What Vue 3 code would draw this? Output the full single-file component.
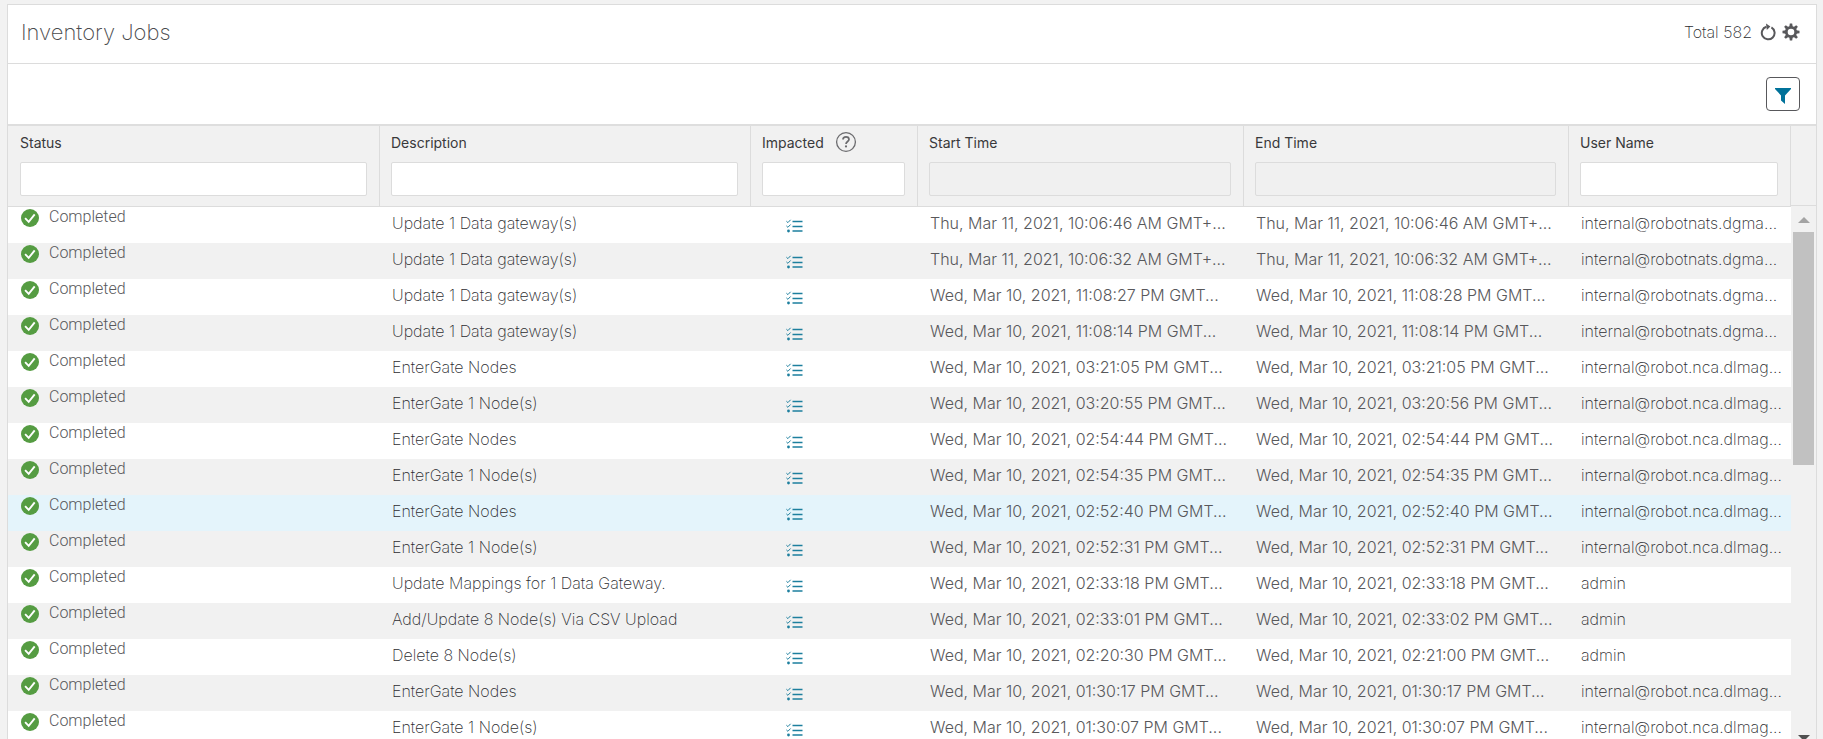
<script setup>
const columns = [
  { key: 'status', label: 'Status' },
  { key: 'description', label: 'Description' },
  { key: 'impacted', label: 'Impacted', help: true },
  { key: 'start', label: 'Start Time', disabled: true },
  { key: 'end', label: 'End Time', disabled: true },
  { key: 'user', label: 'User Name' },
]

const thu = (time) => `Thu, Mar 11, 2021, ${time} AM GMT+...`
const wed = (time) => `Wed, Mar 10, 2021, ${time} PM GMT...`
const dgma = 'internal@robotnats.dgma...'
const nca = 'internal@robot.nca.dlmag...'

const jobs = [
  { description: 'Update 1 Data gateway(s)', start: thu('10:06:46'), end: thu('10:06:46'), user: dgma },
  { description: 'Update 1 Data gateway(s)', start: thu('10:06:32'), end: thu('10:06:32'), user: dgma },
  { description: 'Update 1 Data gateway(s)', start: wed('11:08:27'), end: wed('11:08:28'), user: dgma },
  { description: 'Update 1 Data gateway(s)', start: wed('11:08:14'), end: wed('11:08:14'), user: dgma },
  { description: 'EnterGate Nodes', start: wed('03:21:05'), end: wed('03:21:05'), user: nca },
  { description: 'EnterGate 1 Node(s)', start: wed('03:20:55'), end: wed('03:20:56'), user: nca },
  { description: 'EnterGate Nodes', start: wed('02:54:44'), end: wed('02:54:44'), user: nca },
  { description: 'EnterGate 1 Node(s)', start: wed('02:54:35'), end: wed('02:54:35'), user: nca },
  { description: 'EnterGate Nodes', start: wed('02:52:40'), end: wed('02:52:40'), user: nca, active: true },
  { description: 'EnterGate 1 Node(s)', start: wed('02:52:31'), end: wed('02:52:31'), user: nca },
  { description: 'Update Mappings for 1 Data Gateway.', start: wed('02:33:18'), end: wed('02:33:18'), user: 'admin' },
  { description: 'Add/Update 8 Node(s) Via CSV Upload', start: wed('02:33:01'), end: wed('02:33:02'), user: 'admin' },
  { description: 'Delete 8 Node(s)', start: wed('02:20:30'), end: wed('02:21:00'), user: 'admin' },
  { description: 'EnterGate Nodes', start: wed('01:30:17'), end: wed('01:30:17'), user: nca },
  { description: 'EnterGate 1 Node(s)', start: wed('01:30:07'), end: wed('01:30:07'), user: nca },
]
</script>

<template>
  <div class="page">
    <main class="panel">
      <header class="title-bar">
        <h1>Inventory Jobs</h1>
        <div class="tools">
          <span class="total">Total 582</span>
          <button class="icon-button" type="button" aria-label="Refresh">
            <svg width="16" height="18" viewBox="0 0 16 18">
              <path d="M11.4 4.4A6.4 6.4 0 1 1 6.4 3.8" fill="none" stroke="#58585b" stroke-width="2" />
              <path d="M6 .4 L10.4 3.4 L6.8 7 Z" fill="#58585b" />
            </svg>
          </button>
          <button class="icon-button" type="button" aria-label="Settings">
            <svg width="18" height="18" viewBox="0 0 18 18">
              <g fill="#58585b">
                <path v-for="a in 8" :key="a" :transform="`rotate(${a * 45} 9 9)`" d="M7.3 4 L7.8 .5 H10.2 L10.7 4 Z" />
              </g>
              <circle cx="9" cy="9" r="4.7" fill="none" stroke="#58585b" stroke-width="2.8" />
            </svg>
          </button>
        </div>
      </header>

      <div class="filter-bar">
        <button class="filter-button" type="button" aria-label="Toggle filters">
          <svg width="16" height="16" viewBox="0 0 16 16">
            <path d="M0 0 H16 V1 L10 7.4 V16 L6 12.6 V7.4 L0 1 Z" fill="#00729a" />
          </svg>
        </button>
      </div>

      <div class="grid">
        <table>
          <colgroup>
            <col v-for="c in columns" :key="c.key" :class="`col-${c.key}`" />
          </colgroup>
          <thead>
            <tr>
              <th v-for="c in columns" :key="c.key" scope="col">
                <div class="head">
                  <label :for="`filter-${c.key}`">{{ c.label }}</label>
                  <svg v-if="c.help" width="22" height="22" viewBox="0 0 22 22">
                    <circle cx="11" cy="11" r="9.4" fill="none" stroke="#6b6b6e" stroke-width="1.3" />
                    <path d="M8 8.6C8 6.8 9.3 5.9 11 5.9S14 6.9 14 8.5C14 10.5 11 10.6 11 13" fill="none" stroke="#6b6b6e" stroke-width="1.7" />
                    <circle cx="11" cy="15.4" r="1.1" fill="#6b6b6e" />
                  </svg>
                </div>
                <input :id="`filter-${c.key}`" type="text" :disabled="c.disabled" />
              </th>
            </tr>
          </thead>
          <tbody>
            <tr v-for="(job, i) in jobs" :key="i" :class="{ active: job.active }">
              <td class="status">
                <div class="status-line">
                  <svg width="18" height="18" viewBox="0 0 18 18">
                    <circle cx="9" cy="9" r="9" fill="#559c42" />
                    <path d="M4.1 9.2 L7.7 12.9 L13.7 5.3" fill="none" stroke="#fff" stroke-width="1.9" />
                  </svg>
                  <span>Completed</span>
                </div>
              </td>
              <td>{{ job.description }}</td>
              <td class="impacted">
                <button class="icon-button" type="button" aria-label="Show impacted items">
                  <svg width="17" height="14" viewBox="0 0 17 14" fill="none" stroke="#1d7f9e">
                    <path d="M6.5 2.5 H16.5 M6.5 7.5 H16.5 M6.5 12 H16.5" stroke-width="1.4" />
                    <path d="M.4 2.2 L1.9 3.6 L4.6 .8 M.4 6.9 L1.9 8.3 L4.6 5.5" stroke-width="1" />
                    <circle cx="2.5" cy="12" r="1.4" fill="#1d7f9e" stroke="none" />
                  </svg>
                </button>
              </td>
              <td class="time">{{ job.start }}</td>
              <td class="time">{{ job.end }}</td>
              <td>{{ job.user }}</td>
            </tr>
          </tbody>
        </table>
        <div class="rail">
          <div class="rail-head"></div>
          <div class="track">
            <svg class="arrow" width="12" height="6" viewBox="0 0 12 6"><path d="M0 6 L6 0 L12 6 Z" fill="#a3a3a3" /></svg>
            <div class="thumb"></div>
            <svg class="arrow-down" width="12" height="6" viewBox="0 0 12 6"><path d="M0 0 H12 L6 6 Z" fill="#505050" /></svg>
          </div>
        </div>
      </div>
    </main>
  </div>
</template>

<style>
body {
  margin: 0;
  background: #f2f2f2;
}
</style>

<style scoped>
* {
  box-sizing: border-box;
}
.page {
  height: 100vh;
  padding: 4px 6px 0 7px;
  overflow: hidden;
  background: #f2f2f2;
  color: #2c2c30;
  font-family: Inter, "Liberation Sans", sans-serif;
  font-size: 16px;
  font-weight: 200;
}
.panel {
  height: 100%;
  display: flex;
  flex-direction: column;
  border: 1px solid #dcdcdc;
  border-bottom: 0;
  background: #fff;
}
.title-bar {
  flex: none;
  height: 59px;
  padding: 0 16px 4px 13px;
  display: flex;
  align-items: center;
  justify-content: space-between;
  border-bottom: 1px solid #dcdcdc;
}
h1 {
  margin: 0;
  color: #4a4a4d;
  font-size: 22px;
  line-height: 28px;
  font-weight: 200;
}
.tools {
  display: flex;
  align-items: center;
  gap: 6px;
}
.total {
  margin-right: 2px;
}
.icon-button {
  display: block;
  padding: 0;
  border: 0;
  background: none;
}
.icon-button svg,
.filter-button svg {
  display: block;
}
.filter-bar {
  flex: none;
  height: 62px;
  padding: 13px 16px;
  display: flex;
  justify-content: flex-end;
  border-bottom: 2px solid #dedede;
}
.filter-button {
  width: 34px;
  height: 34px;
  padding: 4px 0 0;
  display: grid;
  place-items: center;
  border: 1px solid #58585b;
  border-radius: 4px;
  background: #fff;
}
.grid {
  flex: 1;
  min-height: 0;
  display: flex;
  align-items: flex-start;
}
table {
  flex: 1;
  min-width: 0;
  table-layout: fixed;
  border-collapse: separate;
  border-spacing: 0;
}
.col-status { width: 372px; }
.col-description { width: 371px; }
.col-impacted { width: 167px; }
.col-start { width: 326px; }
.col-end { width: 325px; }
.col-user { width: 222px; }
th {
  height: 80px;
  padding: 5px 12px 10px 11px;
  border-right: 1px solid #dcdcdc;
  border-bottom: 1px solid #dcdcdc;
  background: #f1f1f1;
  color: #39393b;
  font-size: 14px;
  font-weight: 400;
  text-align: left;
  vertical-align: top;
}
th:first-child {
  padding-left: 12px;
}
.head {
  height: 22px;
  display: flex;
  align-items: center;
  gap: 11px;
}
input {
  display: block;
  width: 100%;
  height: 34px;
  margin-top: 9px;
  padding: 0 8px;
  border: 1px solid #dcdcdc;
  border-radius: 2px;
  background: #fff;
  font: inherit;
}
input:disabled {
  background: #f0f0f0;
}
td {
  height: 36px;
  padding: 0 0 4px 12px;
  overflow: hidden;
  line-height: 20px;
  white-space: nowrap;
}
.time {
  color: #58585b;
  font-weight: 300;
}
tr:nth-child(even) td {
  background: #f1f1f1;
}
tr.active td {
  background: #e4f4fb;
}
.status {
  padding: 0 13px;
  color: #58585b;
  vertical-align: top;
  font-family: Roboto, "Liberation Sans", sans-serif;
  font-weight: 300;
}
.status-line {
  display: flex;
  gap: 10px;
}
.status-line svg {
  margin-top: 2px;
}
.impacted {
  padding: 2px 0 0 35px;
}
.rail {
  width: 25px;
  height: 100%;
  display: flex;
  flex-direction: column;
}
.rail-head {
  flex: none;
  height: 80px;
  border-bottom: 1px solid #dcdcdc;
  background: #f1f1f1;
}
.track {
  flex: 1;
  min-height: 0;
  display: flex;
  flex-direction: column;
  align-items: center;
  overflow: hidden;
  background: #f1f1f1;
}
.arrow {
  flex: none;
  margin: 11px 0 9px;
}
.thumb {
  flex: none;
  width: 21px;
  height: 233px;
  background: #c1c1c1;
}
.arrow-down {
  flex: none;
  margin: auto 0 -2px;
}
</style>
